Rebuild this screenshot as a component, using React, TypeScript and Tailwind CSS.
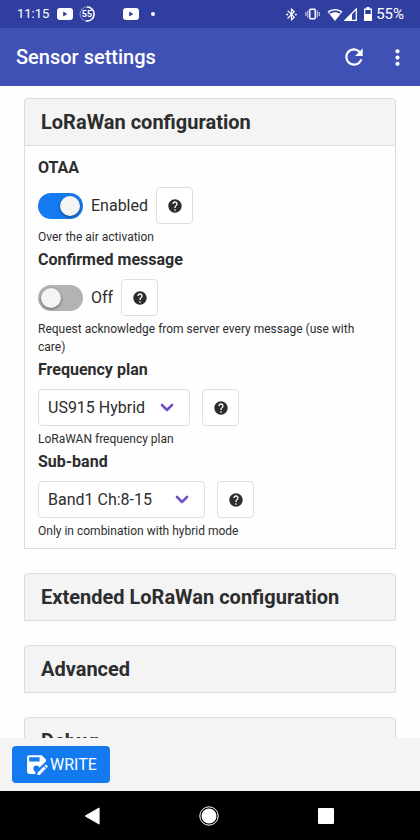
import { useState } from "react";
import type { ReactNode } from "react";
import { MdBluetoothConnected, MdHelp, MdMoreVert, MdRefresh } from "react-icons/md";

function StatusBar() {
  return (
    <div className="flex h-7 shrink-0 items-center bg-[#303f9f] pr-4 pl-[17px] text-[15px] leading-5 text-white">
      <span className="text-[13px]">11:15</span>
      <PlayBadge className="ml-2 h-3 w-4" />
      <svg viewBox="0 0 16 16" className="ml-1.5 h-4 w-4" aria-hidden="true">
        <circle cx="8" cy="8" r="7" fill="none" stroke="#8f97d0" strokeWidth="1" />
        <path d="M8 1a7 7 0 1 1-1 13.9" fill="none" stroke="white" strokeWidth="1.5" />
        <text x="8" y="11" textAnchor="middle" fontSize="9" fontWeight="700" fill="white">
          55
        </text>
      </svg>
      <PlayBadge className="ml-7 h-3 w-4" />
      <span className="ml-3 h-1 w-1 rounded-full bg-white" />
      <div className="ml-auto flex items-center">
        <MdBluetoothConnected className="h-[15px] w-[15px]" />
        <svg viewBox="0 0 15 12" className="ml-1.5 h-3 w-[15px]" aria-hidden="true">
          <rect x="4.8" y="1.3" width="5.4" height="9.4" rx="0.6" fill="none" stroke="white" strokeWidth="1.4" />
          <path d="M2.8 2.5v7M12.2 2.5v7M.8 4v4M14.2 4v4" stroke="#c3c8ea" strokeWidth="1.2" />
        </svg>
        <svg viewBox="0 0 16 13" className="ml-[7px] h-[13px] w-4" aria-hidden="true">
          <path d="M8 13L.5 3.6C4.8 0 11.2 0 15.5 3.6z" fill="white" />
          <path d="M2.2 4.2C5.5 1.8 10.5 1.8 13.8 4.2L12.6 5.7C9.8 3.9 6.2 3.9 3.4 5.7z" fill="#303f9f" />
        </svg>
        <svg viewBox="0 0 13 13" className="ml-px h-[13px] w-[13px]" aria-hidden="true">
          <path d="M12.3 1v11.3H1z" fill="none" stroke="white" strokeWidth="1.3" />
          <path d="M8 5v7.5H.5z" fill="white" />
        </svg>
        <svg viewBox="0 0 8 14" className="ml-[7px] h-[14px] w-2" aria-hidden="true">
          <path d="M2.5 0h3v1.5H8V14H0V1.5h2.5z" fill="white" />
          <path d="M1.2 3h5.6v4H1.2z" fill="#303f9f" />
        </svg>
        <span className="ml-1">55%</span>
      </div>
    </div>
  );
}

function PlayBadge({ className }: { className: string }) {
  return (
    <svg viewBox="0 0 16 12" className={className} aria-hidden="true">
      <rect width="16" height="12" rx="3" fill="white" />
      <path d="M6.2 3.6v4.8L10.4 6z" fill="#303f9f" />
    </svg>
  );
}

function AppBar() {
  return (
    <header className="flex h-[58px] shrink-0 items-center bg-[#3f51b5] px-4 text-white">
      <h1 className="text-[20px] leading-6 font-medium">Sensor settings</h1>
      <button type="button" aria-label="Refresh" className="ml-auto">
        <MdRefresh className="h-[26px] w-[26px]" />
      </button>
      <button type="button" aria-label="More options" className="-mr-1.5 ml-[18px]">
        <MdMoreVert className="h-[25px] w-[25px]" />
      </button>
    </header>
  );
}

function HelpButton({ topic }: { topic: string }) {
  return (
    <button
      type="button"
      aria-label={`Help: ${topic}`}
      className="flex h-[37px] w-[37px] shrink-0 items-center justify-center rounded border border-[#dedede] bg-white"
    >
      <MdHelp className="h-4 w-4" />
    </button>
  );
}

function Setting({ title, help, children }: { title: string; help: string; children: ReactNode }) {
  return (
    <div className="flex flex-col">
      <h3 className="mb-[9px] text-[16px] leading-5 font-bold">{title}</h3>
      <div className="flex h-[37px] items-center">{children}</div>
      <p className="mt-1 text-[12px] leading-[18px]">{help}</p>
    </div>
  );
}

function ToggleSetting({ title, help, initial }: { title: string; help: string; initial: boolean }) {
  const [on, setOn] = useState(initial);
  return (
    <Setting title={title} help={help}>
      <label className="mr-2 flex items-center gap-2 text-[16px] leading-6">
        <input
          type="checkbox"
          checked={on}
          onChange={(e) => setOn(e.target.checked)}
          className="flex h-[26px] w-[45px] appearance-none items-center rounded-full bg-[#b3b3b3] px-[3px] before:h-5 before:w-5 before:rounded-full before:bg-[#f4f4f4] before:shadow-[0_1px_3px_rgba(0,0,0,0.5)] checked:justify-end checked:bg-[#147af0]"
        />
        {on ? "Enabled" : "Off"}
      </label>
      <HelpButton topic={title} />
    </Setting>
  );
}

function SelectSetting({
  title,
  help,
  options,
  width,
}: {
  title: string;
  help: string;
  options: string[];
  width: string;
}) {
  return (
    <Setting title={title} help={help}>
      <div className={`relative mr-3 ${width}`}>
        <select
          aria-label={title}
          className="h-[37px] w-full appearance-none rounded border border-[#dedede] bg-white pr-8 pl-[9px] text-[16px] leading-6"
        >
          {options.map((o) => (
            <option key={o}>{o}</option>
          ))}
        </select>
        <svg
          viewBox="0 0 14 9"
          className="pointer-events-none absolute top-[14px] right-4 h-[9px] w-[14px]"
          fill="none"
          stroke="#7352c4"
          strokeWidth="2.6"
          strokeLinecap="round"
          strokeLinejoin="round"
          aria-hidden="true"
        >
          <path d="M2 2l5 5 5-5" />
        </svg>
      </div>
      <HelpButton topic={title} />
    </Setting>
  );
}

function Section({ title, children }: { title: string; children?: ReactNode }) {
  return (
    <section className="shrink-0">
      <h2 className="rounded-t border border-[#dcdcdc] bg-[#f4f4f4] px-4 py-2.5 text-[20px] leading-[26px] font-bold">
        {title}
      </h2>
      {children && (
        <div className="flex flex-col gap-1 border border-t-0 border-[#dcdcdc] px-[13px] pt-3 pb-2">
          {children}
        </div>
      )}
    </section>
  );
}

function NavBar() {
  return (
    <nav className="grid h-[49px] shrink-0 grid-cols-3 items-center justify-items-center bg-black pr-9 pl-[34px]">
      <button type="button" aria-label="Back">
        <svg viewBox="0 0 18 20" className="h-5 w-[18px]" fill="white">
          <path d="M16 2.2v15.6L2.5 10z" stroke="white" strokeWidth="1.2" strokeLinejoin="round" />
        </svg>
      </button>
      <button type="button" aria-label="Home">
        <svg viewBox="0 0 20 20" className="h-5 w-5">
          <circle cx="10" cy="10" r="7.5" fill="white" />
          <circle cx="10" cy="10" r="9.2" fill="none" stroke="white" strokeWidth="1" />
        </svg>
      </button>
      <button type="button" aria-label="Recent apps">
        <span className="block h-4 w-4 rounded-[1px] bg-white" />
      </button>
    </nav>
  );
}

export default function App() {
  return (
    <div className="flex h-screen flex-col bg-[#fefefe] font-[Roboto,sans-serif] text-[#2d2d2d]">
      <StatusBar />
      <AppBar />
      <main className="flex min-h-0 flex-1 flex-col gap-6 overflow-hidden px-6 pt-3">
        <Section title="LoRaWan configuration">
          <ToggleSetting title="OTAA" help="Over the air activation" initial={true} />
          <ToggleSetting
            title="Confirmed message"
            help="Request acknowledge from server every message (use with care)"
            initial={false}
          />
          <SelectSetting
            title="Frequency plan"
            help="LoRaWAN frequency plan"
            options={["US915 Hybrid"]}
            width="w-[152px]"
          />
          <SelectSetting
            title="Sub-band"
            help="Only in combination with hybrid mode"
            options={["Band1 Ch:8-15"]}
            width="w-[167px]"
          />
        </Section>
        <Section title="Extended LoRaWan configuration" />
        <Section title="Advanced" />
        <Section title="Debug" />
      </main>
      <footer className="flex h-[53px] shrink-0 items-center bg-[#f4f4f4] px-3">
        <button
          type="button"
          className="flex h-[37px] items-center rounded bg-[#147af0] px-[13px] text-[16px] leading-6 text-white"
        >
          <svg viewBox="0 0 24 24" className="h-[25px] w-[25px]" fill="currentColor" aria-hidden="true">
            <path d="M10,19L10.14,18.86C8.9,18.5 8,17.36 8,16A3,3 0 0,1 11,13C12.36,13 13.5,13.9 13.86,15.14L20,9V7L16,3H4C2.89,3 2,3.9 2,5V19A2,2 0 0,0 4,21H10V19M4,5H14V9H4V5M20.04,12.13C19.9,12.13 19.76,12.19 19.65,12.3L18.65,13.3L20.7,15.35L21.7,14.35C21.92,14.14 21.92,13.79 21.7,13.58L20.42,12.3C20.31,12.19 20.18,12.13 20.04,12.13M18.07,13.88L12,19.94V22H14.06L20.12,15.93L18.07,13.88Z" />
          </svg>
          WRITE
        </button>
      </footer>
      <NavBar />
    </div>
  );
}
